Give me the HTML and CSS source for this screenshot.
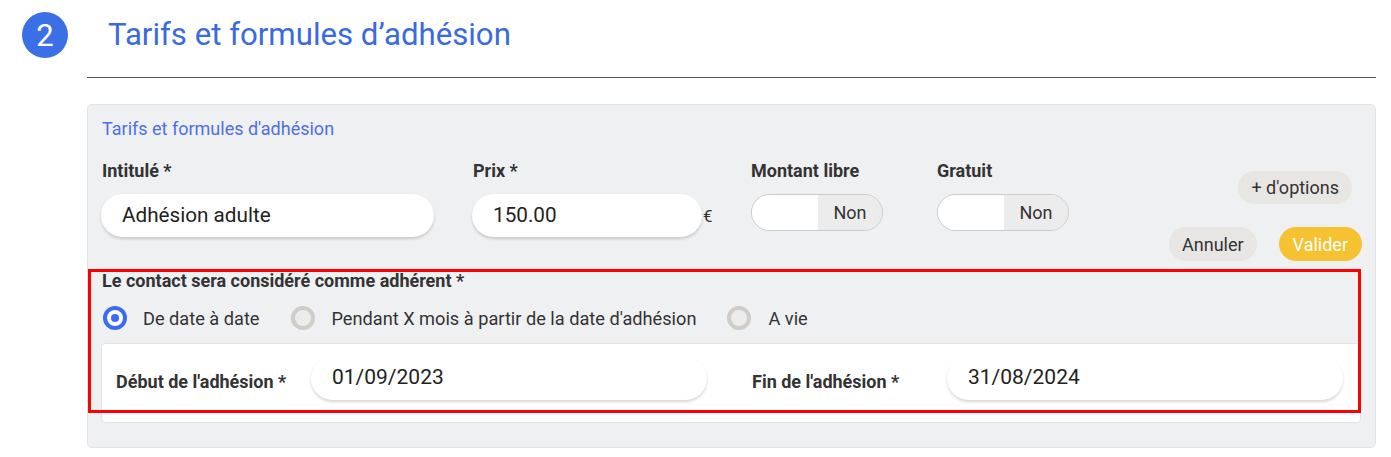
FILE: index.html
```html
<!DOCTYPE html>
<html lang="fr">
<head>
<meta charset="utf-8">
<title>Tarifs et formules d'adhésion</title>
<link rel="stylesheet" href="styles.css">
</head>
<body>
<div class="page">
  <div class="header">
    <div class="step">2</div>
    <h1 class="title">Tarifs et formules d’adhésion</h1>
  </div>
  <div class="rule"></div>

  <div class="card">
    <div class="card-title">Tarifs et formules d'adhésion</div>

    <div class="row1">
      <div class="field f-name">
        <div class="label">Intitulé *</div>
        <div class="input">Adhésion adulte</div>
      </div>
      <div class="field f-price">
        <div class="label">Prix *</div>
        <div class="price-line">
          <div class="input input-price">150.00</div>
          <span class="euro">€</span>
        </div>
      </div>
      <div class="field f-toggle1">
        <div class="label">Montant libre</div>
        <div class="toggle"><span class="t-on"></span><span class="t-off">Non</span></div>
      </div>
      <div class="field f-toggle2">
        <div class="label">Gratuit</div>
        <div class="toggle"><span class="t-on"></span><span class="t-off">Non</span></div>
      </div>
      <div class="actions">
        <button class="btn btn-grey btn-options">+ d'options</button>
        <div class="btn-row">
          <button class="btn btn-grey">Annuler</button>
          <button class="btn btn-yellow">Valider</button>
        </div>
      </div>
    </div>

    <div class="label label-contact">Le contact sera considéré comme adhérent *</div>
    <div class="radios">
      <label class="radio">
        <svg width="24" height="24" viewBox="0 0 24 24"><circle cx="12" cy="12" r="10" fill="#fff" stroke="#3b6cf0" stroke-width="4"/><circle cx="12" cy="12" r="4" fill="#3b6cf0"/></svg>
        <span>De date à date</span>
      </label>
      <label class="radio">
        <svg width="24" height="24" viewBox="0 0 24 24"><circle cx="12" cy="12" r="10" fill="#ececec" stroke="#cfcdca" stroke-width="4"/></svg>
        <span>Pendant X mois à partir de la date d'adhésion</span>
      </label>
      <label class="radio">
        <svg width="24" height="24" viewBox="0 0 24 24"><circle cx="12" cy="12" r="10" fill="#ececec" stroke="#cfcdca" stroke-width="4"/></svg>
        <span>A vie</span>
      </label>
    </div>

    <div class="dates">
      <div class="date-half">
        <div class="label date-label">Début de l'adhésion *</div>
        <div class="input input-date">01/09/2023</div>
      </div>
      <div class="date-half">
        <div class="label date-label">Fin de l'adhésion *</div>
        <div class="input input-date">31/08/2024</div>
      </div>
    </div>

    <div class="highlight"></div>
  </div>
</div>
</body>
</html>
```

FILE: styles.css
```css
* { box-sizing: border-box; }

body {
  margin: 0;
  background: #ffffff;
  font-family: Roboto, "Liberation Sans", Arial, sans-serif;
  color: #333333;
}

.page {
  width: 1391px;
}

.header {
  display: flex;
  align-items: center;
  height: 46px;
  margin-top: 12px;
  padding-left: 22px;
}

.step {
  width: 46px;
  height: 46px;
  border-radius: 50%;
  background: #3a6fe6;
  color: #ffffff;
  font-size: 31px;
  display: flex;
  align-items: center;
  justify-content: center;
  line-height: 1;
}

.title {
  margin: 0 0 0 40px;
  font-size: 31.2px;
  font-weight: 400;
  color: #3a6ae0;
  line-height: 46px;
}

.rule {
  margin: 19px 0 0 87px;
  width: 1289px;
  border-top: 1px solid #5a5a5a;
}

.card {
  position: relative;
  margin: 26px 0 0 87px;
  width: 1289px;
  height: 344px;
  background: #eff0f2;
  border: 1px solid #e2e3e5;
  border-radius: 5px;
  padding: 14px 13px 0 14px;
}

.card-title {
  font-size: 18px;
  line-height: 20px;
  color: #4d70e6;
}

.label {
  font-size: 18px;
  font-weight: 700;
  line-height: 20px;
  color: #333333;
}

.row1 {
  display: flex;
  align-items: flex-start;
  margin-top: 22px;
  height: 100px;
}

.field .label { margin-bottom: 13px; }

.f-name { width: 333px; margin-left: -1px; }
.f-name .label { padding-left: 1px; }
.f-price { margin-left: 38px; width: 279px; }
.f-price .label { padding-left: 1px; }
.f-toggle1 { width: 186px; }
.f-toggle2 { width: 132px; }

.input {
  background: #ffffff;
  height: 43px;
  border-radius: 22px;
  box-shadow: 0 2px 3px rgba(0, 0, 0, 0.16);
  font-size: 20.7px;
  line-height: 43px;
  padding-left: 21px;
  color: #222222;
}

.price-line {
  display: flex;
  align-items: center;
}

.input-price { width: 230px; }

.euro {
  font-size: 17px;
  margin-left: 1px;
  color: #333333;
}

.toggle {
  display: flex;
  width: 132px;
  height: 37px;
  margin-top: 1px;
  border: 1px solid #cbcbcb;
  border-radius: 19px;
  overflow: hidden;
}

.t-on {
  width: 66px;
  background: #ffffff;
}

.t-off {
  flex: 1;
  background: #ececec;
  font-size: 18px;
  line-height: 35px;
  text-align: center;
  color: #333333;
}

.actions {
  margin-left: auto;
  display: flex;
  flex-direction: column;
  align-items: flex-end;
  padding-top: 10px;
}

.btn {
  border: none;
  font-family: Roboto, "Liberation Sans", Arial, sans-serif;
  font-size: 18px;
  border-radius: 17px;
  height: 34px;
  padding: 0 13px;
  cursor: pointer;
}

.btn-grey {
  background: #e8e6e3;
  color: #333333;
}

.btn-yellow {
  background: #f6c232;
  color: #ffffff;
  padding: 0 14px;
}

.btn-options {
  height: 33px;
  margin-right: 10px;
}

.btn-row {
  display: flex;
  gap: 22px;
  margin-top: 23px;
}

.label-contact {
  margin-top: 10px;
}

.radios {
  display: flex;
  align-items: center;
  margin-top: 15px;
  height: 24px;
  padding-left: 1px;
}

.radio {
  display: flex;
  align-items: center;
  gap: 17px;
  font-size: 18.2px;
  color: #333333;
  margin-right: 31px;
}

.radio:first-child { gap: 16px; }

.radio svg { display: block; flex: none; }

.dates {
  display: flex;
  margin-top: 13px;
  margin-left: -1px;
  width: 1260px;
  height: 80px;
  background: #ffffff;
  border: 1px solid #e4e4e4;
  border-radius: 4px;
  padding: 13px 0 0 14px;
  gap: 45px;
}

.date-half {
  display: flex;
  align-items: center;
  height: 43px;
}

.date-label {
  width: 195px;
  padding-top: 6px;
}

.input-date {
  width: 396px;
  font-size: 21px;
  padding-bottom: 3px;
  line-height: 40px;
}

.highlight {
  position: absolute;
  left: 0;
  top: 164px;
  width: 1273px;
  height: 144px;
  border: 3px solid #ff0000;
  pointer-events: none;
}
```
